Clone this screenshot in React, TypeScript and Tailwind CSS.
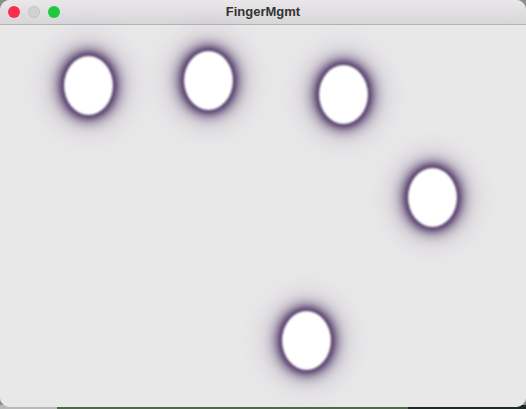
const touches = [
  { x: 63, y: 56 },
  { x: 183, y: 51 },
  { x: 318, y: 65 },
  { x: 407, y: 168 },
  { x: 281, y: 311 },
];

export default function App() {
  return (
    <div className="relative h-[409px] w-[526px] overflow-hidden bg-[#8a8f86] font-['Liberation_Sans',sans-serif]">
      <div className="absolute bottom-0 left-0 flex h-[4px] w-full">
        <div className="w-[57px] bg-[#b9b9b7]" />
        <div className="flex-1 bg-[#4d6a48]" />
        <div className="w-[118px] bg-[#1d2b26]" />
      </div>
      <div className="relative flex h-[407px] w-[526px] flex-col overflow-hidden rounded-[10px] bg-[#e9e8e9]">
        <div className="relative flex h-[25px] shrink-0 items-center border-b border-[#b3b2b3] bg-gradient-to-b from-[#e9e7e9] to-[#d8d6d8]">
          <div className="flex gap-[8px] pl-[8px]">
            <div className="h-[12px] w-[12px] rounded-full bg-[#fe2d4f]" />
            <div className="h-[12px] w-[12px] rounded-full border border-[#c2c2c2] bg-[#d2d2d2]" />
            <div className="h-[12px] w-[12px] rounded-full bg-[#1ec93e]" />
          </div>
          <div className="absolute inset-0 flex items-center justify-center text-[13px] font-bold text-[#333]">
            FingerMgmt
          </div>
        </div>
        <div className="relative flex-1 bg-[#e9e8e9]">
          {touches.map((t, i) => (
            <div
              key={i}
              className="absolute h-[61px] w-[51px]"
              style={{ left: t.x, top: t.y - 26 }}
            >
              <div className="absolute inset-[-14px] rounded-[50%] bg-[#7a6a88] opacity-30 blur-[14px]" />
              <div className="absolute inset-[-4px] rounded-[50%] bg-[#4e3366] blur-[7px]" />
              <div className="absolute inset-[-1px] rounded-[50%] bg-[#42285a] opacity-80 blur-[3px]" />
              <div className="absolute inset-[1px] rounded-[50%] bg-white blur-[1px]" />
            </div>
          ))}
        </div>
      </div>
    </div>
  );
}
